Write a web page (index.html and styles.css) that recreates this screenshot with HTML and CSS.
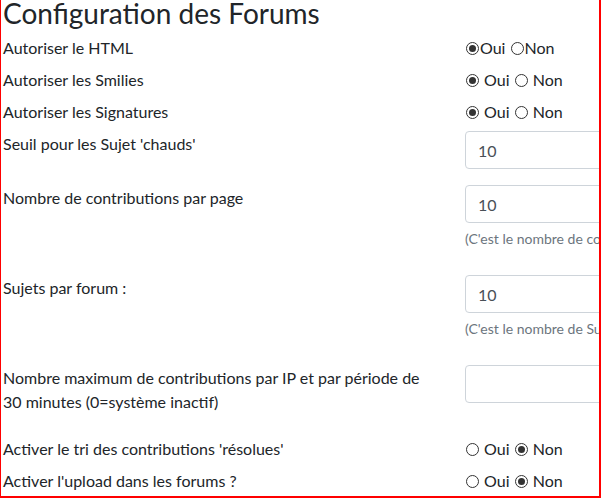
FILE: index.html
```html
<!DOCTYPE html>
<html lang="fr">
<head>
<meta charset="utf-8">
<title>Configuration des Forums</title>
<link rel="stylesheet" href="styles.css">
</head>
<body>
<div class="frame">
  <h3 class="title">Configuration des Forums</h3>

  <div class="row row-radio">
    <div class="label">Autoriser le HTML</div>
    <div class="ctrl"><input type="radio" name="html" checked>Oui <input type="radio" name="html">Non</div>
  </div>
  <div class="row row-radio">
    <div class="label">Autoriser les Smilies</div>
    <div class="ctrl"><input type="radio" name="smilies" checked> Oui <input type="radio" name="smilies"> Non</div>
  </div>
  <div class="row row-radio">
    <div class="label">Autoriser les Signatures</div>
    <div class="ctrl"><input type="radio" name="sig" checked> Oui <input type="radio" name="sig"> Non</div>
  </div>

  <div class="row row-input r-hot">
    <div class="label">Seuil pour les Sujet 'chauds'</div>
    <div class="ctrl"><input class="field" type="text" value="10"></div>
  </div>
  <div class="row row-input r-help">
    <div class="label">Nombre de contributions par page</div>
    <div class="ctrl"><input class="field" type="text" value="10"><div class="help">(C'est le nombre de contributions par page)</div></div>
  </div>
  <div class="row row-input r-help">
    <div class="label">Sujets par forum :</div>
    <div class="ctrl"><input class="field" type="text" value="10"><div class="help">(C'est le nombre de Sujets par forum)</div></div>
  </div>
  <div class="row row-input r-flood">
    <div class="label">Nombre maximum de contributions par IP et par période de 30 minutes (0=système inactif)</div>
    <div class="ctrl"><input class="field" type="text" value=""></div>
  </div>

  <div class="row row-radio">
    <div class="label">Activer le tri des contributions 'résolues'</div>
    <div class="ctrl"><input type="radio" name="tri"> Oui <input type="radio" name="tri" checked> Non</div>
  </div>
  <div class="row row-radio">
    <div class="label">Activer l'upload dans les forums ?</div>
    <div class="ctrl"><input type="radio" name="upl"> Oui <input type="radio" name="upl" checked> Non</div>
  </div>
</div>
</body>
</html>
```

FILE: styles.css
```css
html, body {
  margin: 0;
  padding: 0;
  background: #fff;
}

body {
  font-family: Lato, "Liberation Sans", sans-serif;
  font-size: 16px;
  line-height: 24px;
  color: #212529;
}

.frame {
  box-sizing: border-box;
  width: 601px;
  height: 498px;
  border-left: 1px solid #ff0000;
  border-right: 2px solid #ff0000;
  border-bottom: 2px solid #ff0000;
  padding-left: 2px;
  overflow: hidden;
}

.title {
  margin: -4px 0 0 0;
  height: 40px;
  font-size: 28px;
  font-weight: 400;
  line-height: 34px;
  color: #212529;
}

.row {
  display: flex;
  align-items: flex-start;
}

.label {
  flex: 0 0 462px;
  box-sizing: border-box;
  padding-right: 37px;
}

.ctrl {
  flex: 0 0 auto;
  width: 300px;
}

.row-radio {
  height: 24px;
  margin-bottom: 8px;
}

.row-input .label {
  padding-top: 1px;
}

.r-hot {
  margin-top: -1px;
  margin-bottom: 16px;
}

.r-help {
  margin-bottom: 27px;
}

.r-flood {
  margin-bottom: 23px;
}

input[type="radio"] {
  -webkit-appearance: none;
  appearance: none;
  box-sizing: border-box;
  width: 13px;
  height: 13px;
  margin: 0 1px 0 1px;
  border: 1px solid #333;
  border-radius: 50%;
  background: #fff;
  vertical-align: -1px;
  position: relative;
}

input[type="radio"]:checked::after {
  content: "";
  position: absolute;
  left: 2px;
  top: 2px;
  width: 7px;
  height: 7px;
  border-radius: 50%;
  background: #333;
}

.field {
  box-sizing: border-box;
  display: block;
  width: 300px;
  height: 38px;
  padding: 6px 12px;
  font-family: inherit;
  font-size: 16px;
  line-height: 24px;
  color: #495057;
  background: #fff;
  border: 1px solid #ced4da;
  border-radius: 4px;
  margin: 0;
}

.help {
  margin-top: 6px;
  font-size: 14px;
  line-height: 19px;
  color: #6c757d;
  white-space: nowrap;
}
```
